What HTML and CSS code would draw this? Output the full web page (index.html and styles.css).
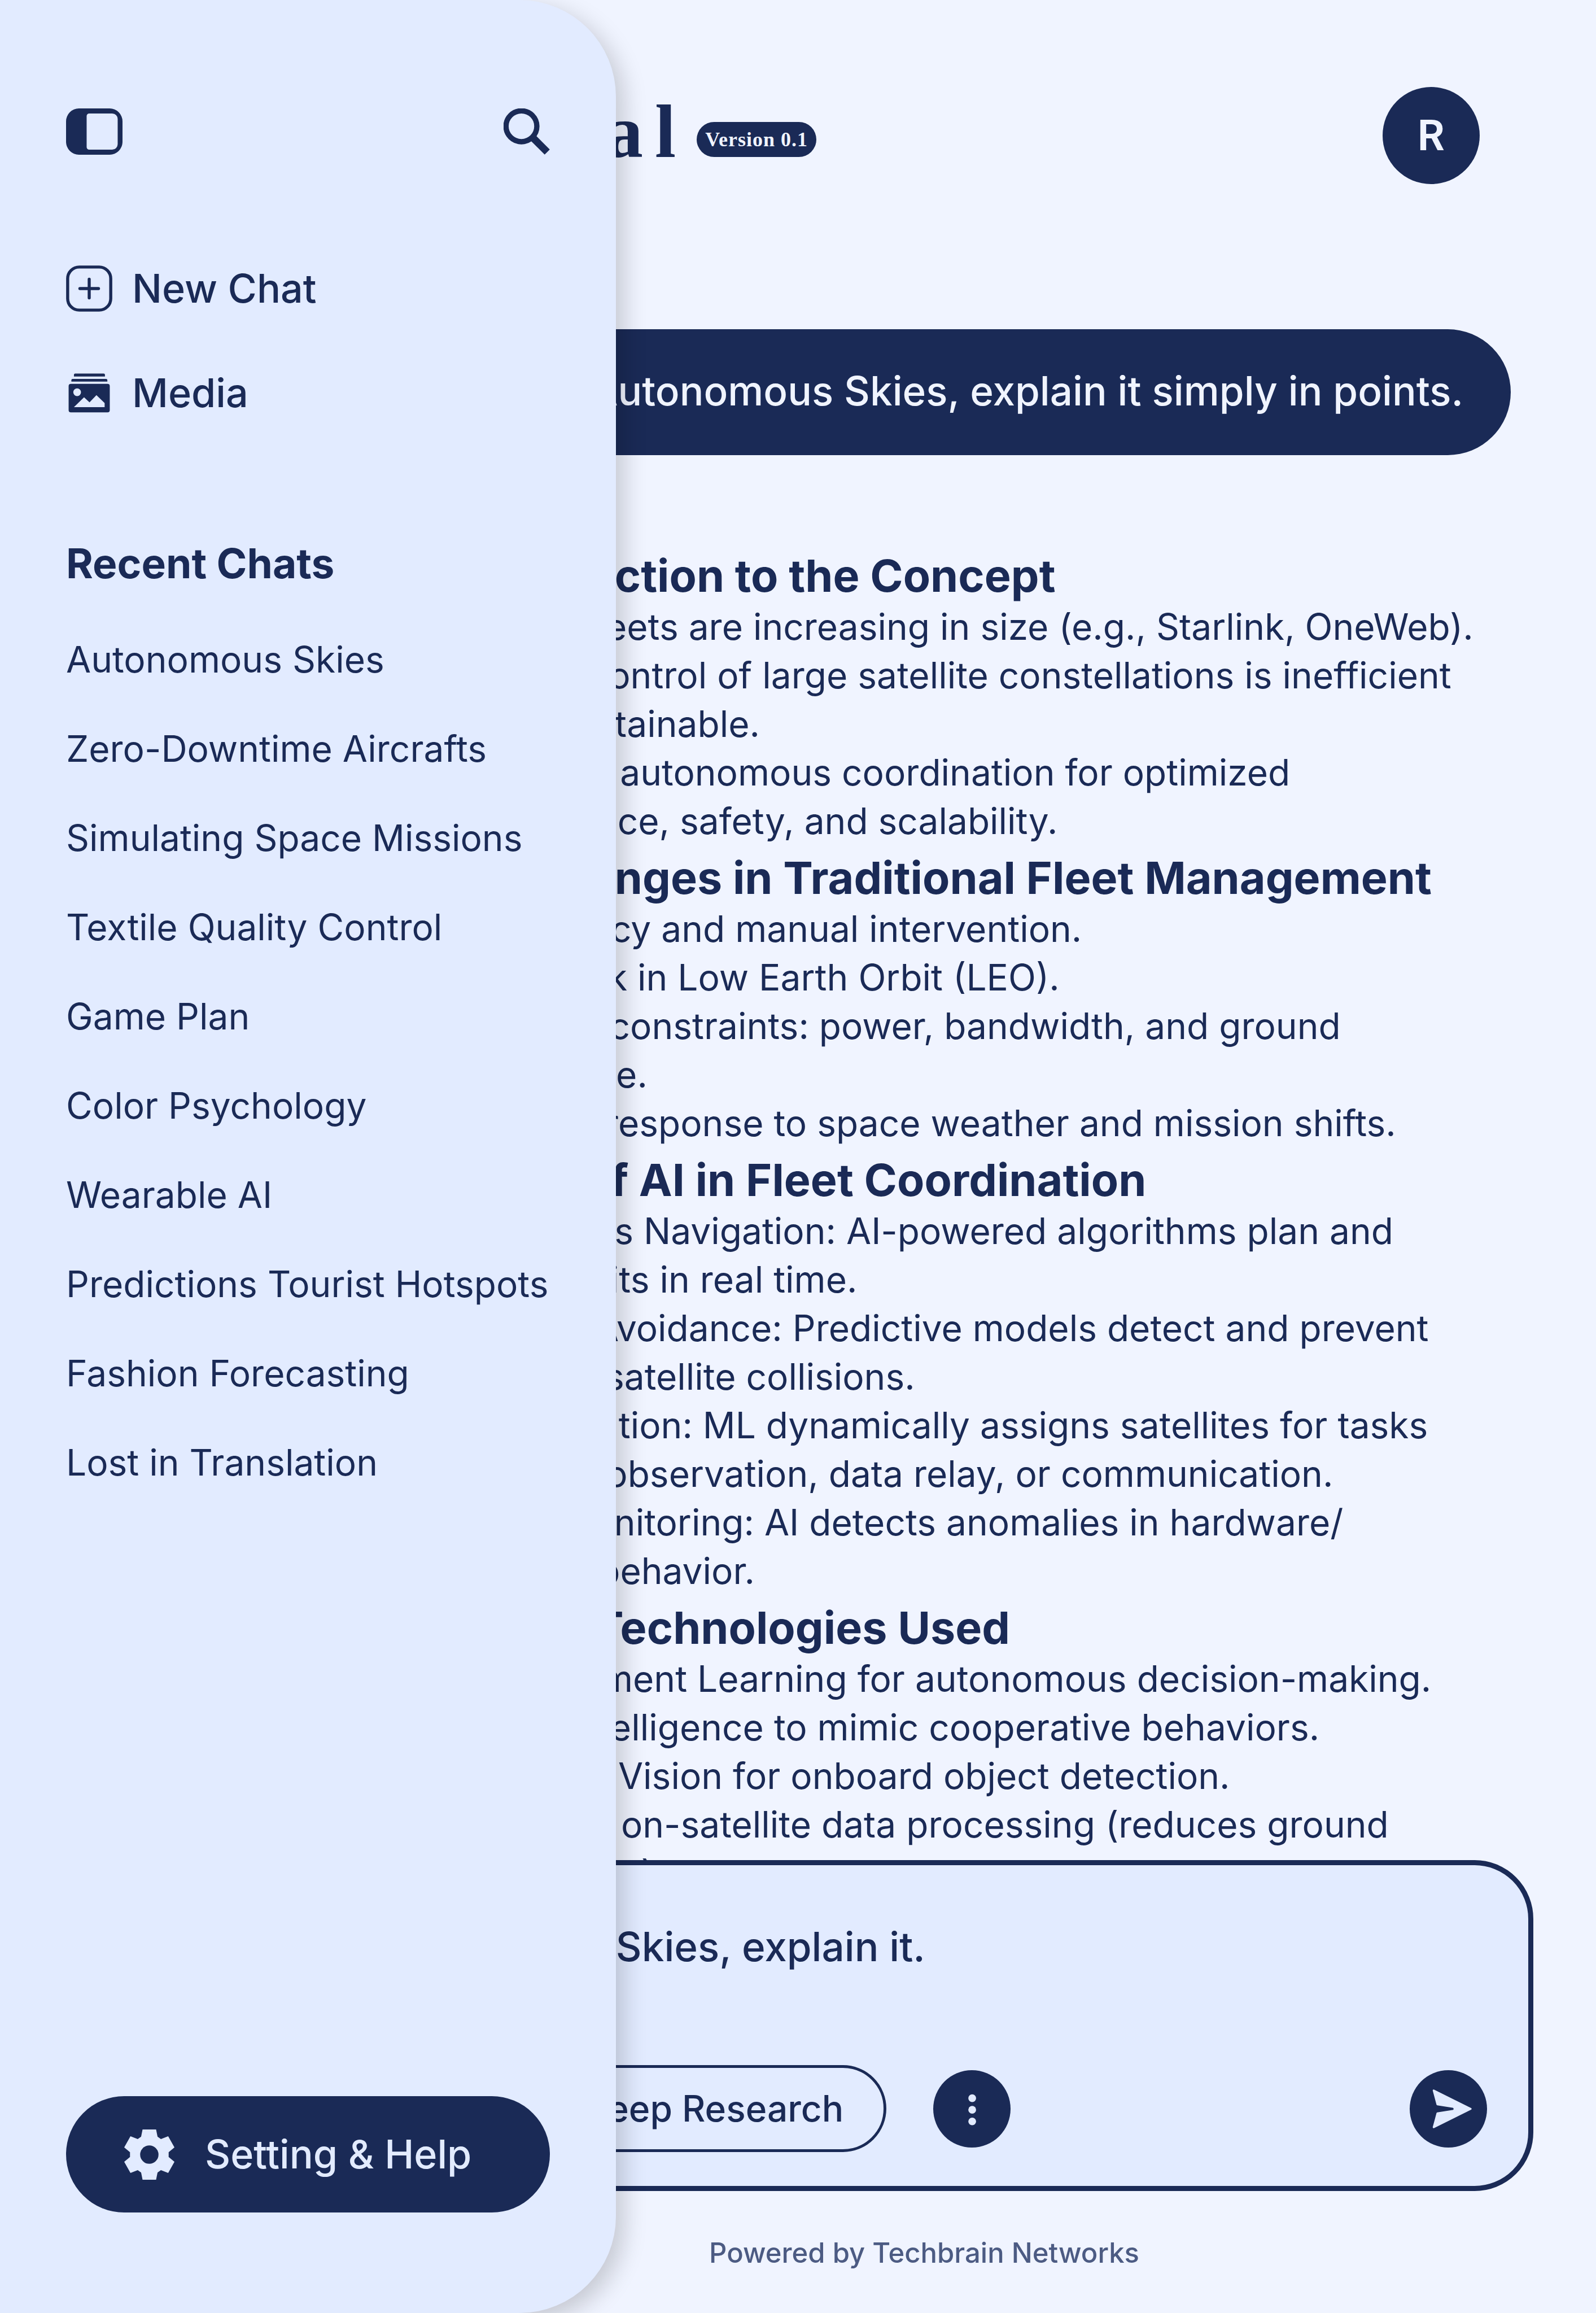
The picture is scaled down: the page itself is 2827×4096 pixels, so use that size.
FILE: index.html
```html
<!DOCTYPE html>
<html lang="en">
<head>
<meta charset="utf-8">
<meta name="viewport" content="width=device-width, initial-scale=1">
<title>Orbital</title>
<link rel="stylesheet" href="styles.css">
</head>
<body>
<div class="app">
  <main class="main">
    <header class="header">
      <div class="brand">
        <h1 class="logo">Orbital</h1>
        <span class="version">Version 0.1</span>
      </div>
      <button class="avatar" type="button" aria-label="Account">R</button>
    </header>

    <section class="thread" aria-label="Conversation">
      <p class="bubble">Autonomous Skies, explain it simply in points.</p>
      <div class="answer">
        <h2>1 Abstraction to the Concept</h2>
        <ul>
          <li>Satellite fleets are increasing in size (e.g., Starlink, OneWeb).</li>
          <li>External control of large satellite constellations is inefficient<br>and unsustainable.</li>
          <li>Integrates autonomous coordination for optimized<br>performance, safety, and scalability.</li>
        </ul>
        <h2>2 Challenges in Traditional Fleet Management</h2>
        <ul>
          <li>High latency and manual intervention.</li>
          <li>Impact risk in Low Earth Orbit (LEO).</li>
          <li>Resource constraints: power, bandwidth, and ground<br>station time.</li>
          <li>Hindered response to space weather and mission shifts.</li>
        </ul>
        <h2>3 Role of AI in Fleet Coordination</h2>
        <ul>
          <li>Continuous Navigation: AI-powered algorithms plan and<br>adjust orbits in real time.</li>
          <li>Collision Avoidance: Predictive models detect and prevent<br>imminent satellite collisions.</li>
          <li>Job Allocation: ML dynamically assigns satellites for tasks<br>like Earth observation, data relay, or communication.</li>
          <li>Health Monitoring: AI detects anomalies in hardware/<br>software behavior.</li>
        </ul>
        <h2>4 Core Technologies Used</h2>
        <ul>
          <li>Reinforcement Learning for autonomous decision-making.</li>
          <li>Swarm Intelligence to mimic cooperative behaviors.</li>
          <li>Computer Vision for onboard object detection.</li>
          <li>Edge AI in on-satellite data processing (reduces ground<br>intervention).</li>
        </ul>
      </div>
    </section>

    <form class="composer">
      <input class="prompt" type="text" aria-label="Message" value="Autonomous Skies, explain it.">
      <div class="tools">
        <button class="round" type="button" aria-label="Attach">
          <svg viewBox="0 0 480 480"><path d="M240 150v180M150 240h180" stroke="currentColor" stroke-width="30" stroke-linecap="round"/></svg>
        </button>
        <button class="research" type="button">
          <svg viewBox="0 0 24 24" fill="none" stroke="currentColor" stroke-width="2"><circle cx="12" cy="12" r="9"/><path d="M3 12h18M12 3c5 5 5 13 0 18M12 3c-5 5-5 13 0 18"/></svg>
          <span>Deep Research</span>
        </button>
        <button class="round" type="button" aria-label="More">
          <svg viewBox="0 0 480 480" fill="currentColor"><circle cx="242" cy="174" r="24"/><circle cx="242" cy="246" r="24"/><circle cx="242" cy="318" r="24"/></svg>
        </button>
        <button class="round send" type="submit" aria-label="Send">
          <svg viewBox="0 0 480 480" fill="currentColor" stroke="currentColor" stroke-width="12" stroke-linejoin="round"><path d="M149 126L378 240L149 354L172 268L284 252L284 228L172 212Z" stroke="none"/><path d="M149 126L378 240L149 354L172 268L272 252Q286 240 272 228L172 212Z"/></svg>
        </button>
      </div>
    </form>

    <footer class="footer">Powered by Techbrain Networks</footer>
  </main>

  <aside class="sidebar">
    <div class="sidebar-top">
      <button class="icon-button" type="button" aria-label="Toggle sidebar">
        <svg class="icon-panel" viewBox="48 72 351 287"><path fill="currentColor" fill-rule="evenodd" d="M128 72H319A80 80 0 0 1 399 152V279A80 80 0 0 1 319 359H128A80 80 0 0 1 48 279V152A80 80 0 0 1 128 72ZM192 103A16 16 0 0 0 176 119V312A16 16 0 0 0 192 328H335A34 34 0 0 0 369 294V137A34 34 0 0 0 335 103Z"/></svg>
      </button>
      <button class="icon-button" type="button" aria-label="Search chats">
        <svg class="icon" viewBox="0 0 96 96" fill="none" stroke="currentColor"><circle cx="37" cy="37" r="32" stroke-width="11"/><path d="M59 59L90.500 90.500" stroke-width="15"/></svg>
      </button>
    </div>

    <nav class="menu" aria-label="Main">
      <a href="#new">
        <svg class="icon" viewBox="48 54 288 288" fill="none" stroke="currentColor" stroke-width="19" stroke-linecap="round"><rect x="58" y="64" width="268" height="268" rx="72"/><path d="M192 140v116M134 198h116"/></svg>
        <span>New Chat</span>
      </a>
      <a href="#media">
        <svg class="icon" viewBox="48 694 288 288" fill="currentColor"><path d="M97 735V725Q97 717 105 717H282Q290 717 290 725V735ZM81 767V758Q81 750 89 750H297Q305 750 305 758V767Z"/><path fill-rule="evenodd" d="M78 781H306A14 14 0 0 1 320 795V944A14 14 0 0 1 306 958H78A14 14 0 0 1 64 944V795A14 14 0 0 1 78 781ZM93 833A24 24 0 1 0 141 833A24 24 0 1 0 93 833ZM97 926H288V900L237 851L194 896L160 864Z"/></svg>
        <span>Media</span>
      </a>
    </nav>

    <nav class="recent" aria-labelledby="recent-title">
      <h2 id="recent-title">Recent Chats</h2>
      <ul>
        <li><a href="#c1">Autonomous Skies</a></li>
        <li><a href="#c2">Zero-Downtime Aircrafts</a></li>
        <li><a href="#c3">Simulating Space Missions</a></li>
        <li><a href="#c4">Textile Quality Control</a></li>
        <li><a href="#c5">Game Plan</a></li>
        <li><a href="#c6">Color Psychology</a></li>
        <li><a href="#c7">Wearable AI</a></li>
        <li><a href="#c8">Predictions Tourist Hotspots</a></li>
        <li><a href="#c9">Fashion Forecasting</a></li>
        <li><a href="#c10">Lost in Translation</a></li>
      </ul>
    </nav>

    <button class="settings" type="button">
      <svg viewBox="-52 -52 104 104"><path fill="currentColor" fill-rule="evenodd" d="M-14-52H14L17-37L24-32L39-38L52-15L40-5V5L52 15L39 38L24 32L17 37L14 52H-14L-17 37L-24 32L-39 38L-52 15L-40 5V-5L-52-15L-39-38L-24-32L-17-37ZM-19 0A19 19 0 1 0 19 0A19 19 0 1 0-19 0Z"/></svg>
      <span>Setting &amp; Help</span>
    </button>
  </aside>
</div>
</body>
</html>
```
FILE: styles.css
```css
:root {
  --navy: #1a2a56;
  --paper: #f0f4ff;
  --panel: #e2ebff;
  --muted: #4c5b83;
  --edge: 117px;
}

* { box-sizing: border-box; }

body {
  margin: 0;
  background: var(--paper);
  color: var(--navy);
  font: 400 64px/86px Inter, "Liberation Sans", sans-serif;
}

h1, h2, p, ul { margin: 0; padding: 0; }
ul { list-style: none; }
a { color: inherit; text-decoration: none; }
svg { display: block; }

button {
  margin: 0;
  padding: 0;
  border: 0;
  background: none;
  color: inherit;
  font: inherit;
  cursor: pointer;
}

.app {
  position: relative;
  height: 100vh;
  overflow: hidden;
}

/* Conversation */
.main {
  display: flex;
  flex-direction: column;
  height: 100%;
  padding: 154px 111px 0 558px;
}

.header {
  display: flex;
  justify-content: space-between;
  align-items: flex-start;
  padding: 0 95px 0 89px;
}

.brand {
  display: flex;
  align-items: flex-end;
  gap: 16px;
  padding-top: 34px;
}

.logo {
  font: 700 134px/90px "Liberation Serif", serif;
  letter-spacing: 21px;
}

.version {
  padding: 0 15px;
  border-radius: 31px;
  background: var(--navy);
  color: var(--paper);
  font: 700 36px/62px "Liberation Serif", serif;
  letter-spacing: 1px;
}

.avatar {
  width: 172px;
  height: 172px;
  border-radius: 50%;
  background: var(--navy);
  color: var(--paper);
  font: 600 76px/172px Roboto, sans-serif;
}

.thread {
  flex: 1;
  min-height: 0;
  overflow: hidden;
  display: flex;
  flex-direction: column;
  margin-top: 257px;
}

.bubble {
  align-self: flex-end;
  margin: 0 40px 156px 0;
  padding: 66px 84px 71px;
  border-radius: 112px;
  background: var(--navy);
  color: var(--paper);
  font-size: 71px;
  font-weight: 500;
  white-space: nowrap;
}

.answer {
  padding-left: 219px;
  white-space: nowrap;
}

.answer h2 {
  margin-top: 9px;
  font-size: 79px;
  font-weight: 700;
  line-height: 96px;
}

.composer {
  display: flex;
  flex-direction: column;
  gap: 167px;
  padding: 101px 73px 60px;
  border: 9px solid var(--navy);
  border-radius: 104px;
  background: var(--panel);
}

.prompt {
  width: 100%;
  height: 86px;
  padding: 0;
  border: 0;
  outline: 0;
  background: none;
  color: inherit;
  font: inherit;
  font-size: 71px;
  font-weight: 500;
}

.tools {
  display: flex;
  align-items: center;
  gap: 83px;
}

.round {
  width: 137px;
  height: 137px;
  border-radius: 50%;
  background: var(--navy);
  color: var(--panel);
}

.send { margin-left: auto; }

.research {
  display: flex;
  align-items: center;
  gap: 34px;
  height: 154px;
  padding: 0 71px;
  border: 5px solid var(--navy);
  border-radius: 77px;
  font-weight: 500;
  white-space: nowrap;
}

.research svg {
  width: 60px;
  height: 60px;
}

.footer {
  padding-top: 4px;
  color: var(--muted);
  font-size: 49px;
  font-weight: 500;
  line-height: 212px;
  text-align: center;
}

/* Drawer that slides over the conversation */
.sidebar {
  position: absolute;
  inset: 0 auto 0 0;
  display: flex;
  flex-direction: column;
  width: 1091px;
  padding: 192px var(--edge) 178px;
  border-radius: 0 171px 171px 0;
  background: var(--panel);
  box-shadow: 14px 14px 41px rgba(0, 0, 0, 0.18);
}

.sidebar-top {
  display: flex;
  justify-content: space-between;
}

.icon,
.icon-panel {
  width: 82px;
  height: 82px;
}

.icon-panel { width: 100px; }

.menu {
  display: flex;
  flex-direction: column;
  gap: 103px;
  margin-top: 196px;
  font-size: 70px;
  font-weight: 500;
  line-height: 82px;
}

.menu a {
  display: flex;
  align-items: center;
  gap: 35px;
}

.recent {
  margin-top: 218px;
  line-height: 158px;
  white-space: nowrap;
}

.recent h2 {
  margin-bottom: 48px;
  font-size: 73px;
  font-weight: 700;
  line-height: 86px;
}

.settings {
  display: flex;
  align-items: center;
  gap: 54px;
  height: 206px;
  margin-top: auto;
  padding-left: 103px;
  border-radius: 103px;
  background: var(--navy);
  color: var(--panel);
  font-size: 70px;
  font-weight: 500;
}

.settings svg {
  width: 89px;
  height: 89px;
}
```
